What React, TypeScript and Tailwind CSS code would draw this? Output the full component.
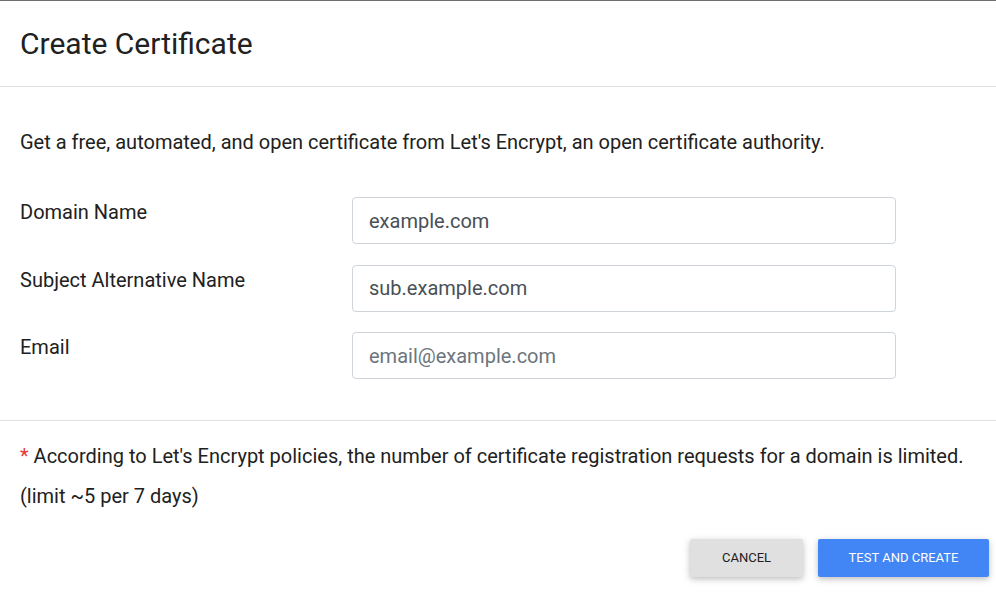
import React from 'react';

// Let's Encrypt certificate dialog
const fields = [
  { label: 'Domain Name', value: 'example.com', placeholder: '' },
  { label: 'Subject Alternative Name', value: 'sub.example.com', placeholder: '' },
  { label: 'Email', value: '', placeholder: 'email@example.com' },
];

const App = () => {
  return (
    <div className="w-[996px] h-[603px] overflow-hidden bg-white font-['Roboto',sans-serif] text-[#212121]">
      {/* backdrop strip behind the modal */}
      <div className="h-px bg-[#6e6e6e]" />

      {/* Header */}
      <div className="h-[86px] flex items-center px-5 border-b border-[#e0e0e6]">
        <h1 className="text-[30px] leading-none font-normal text-[#212121]">Create Certificate</h1>
      </div>

      {/* Body */}
      <div className="px-5 pt-[41px] pb-[41px] border-b border-[#e0e0e6]">
        <p className="text-[20px] leading-[28px]">
          Get a free, automated, and open certificate from Let's Encrypt, an open certificate authority.
        </p>
        <div className="mt-[41px] flex flex-col gap-[20.5px]">
          {fields.map(f => (
            <div key={f.label} className="flex">
              <label className="w-[332px] text-[20px] leading-[28px] pt-px">{f.label}</label>
              <input
                defaultValue={f.value}
                placeholder={f.placeholder}
                className="w-[544px] h-[47px] px-4 text-[20px] text-[#495057] placeholder:text-[#6c757d] border border-[#ced4da] rounded-[4px] outline-none bg-white"
              />
            </div>
          ))}
        </div>
      </div>

      {/* Footer */}
      <div className="px-5 pt-[15px]">
        <p className="text-[20px] leading-[40px]">
          <span className="text-[#e53935]">*</span> According to Let's Encrypt policies, the number of certificate registration requests for a domain is limited.
        </p>
        <p className="text-[20px] leading-[40px]">(limit ~5 per 7 days)</p>
      </div>
      <div className="flex justify-end gap-[15px] pr-[7px] mt-[23px]">
        <button className="w-[113px] h-[38px] rounded-[2px] bg-[#e0e0e0] text-[13px] text-[#212121] uppercase shadow-[0_2px_5px_rgba(0,0,0,0.16),0_2px_10px_rgba(0,0,0,0.12)]">
          Cancel
        </button>
        <button className="w-[171px] h-[38px] rounded-[2px] bg-[#4285f4] text-[13px] text-white uppercase shadow-[0_2px_5px_rgba(0,0,0,0.16),0_2px_10px_rgba(0,0,0,0.12)]">
          Test and Create
        </button>
      </div>
    </div>
  );
};

export default App;
